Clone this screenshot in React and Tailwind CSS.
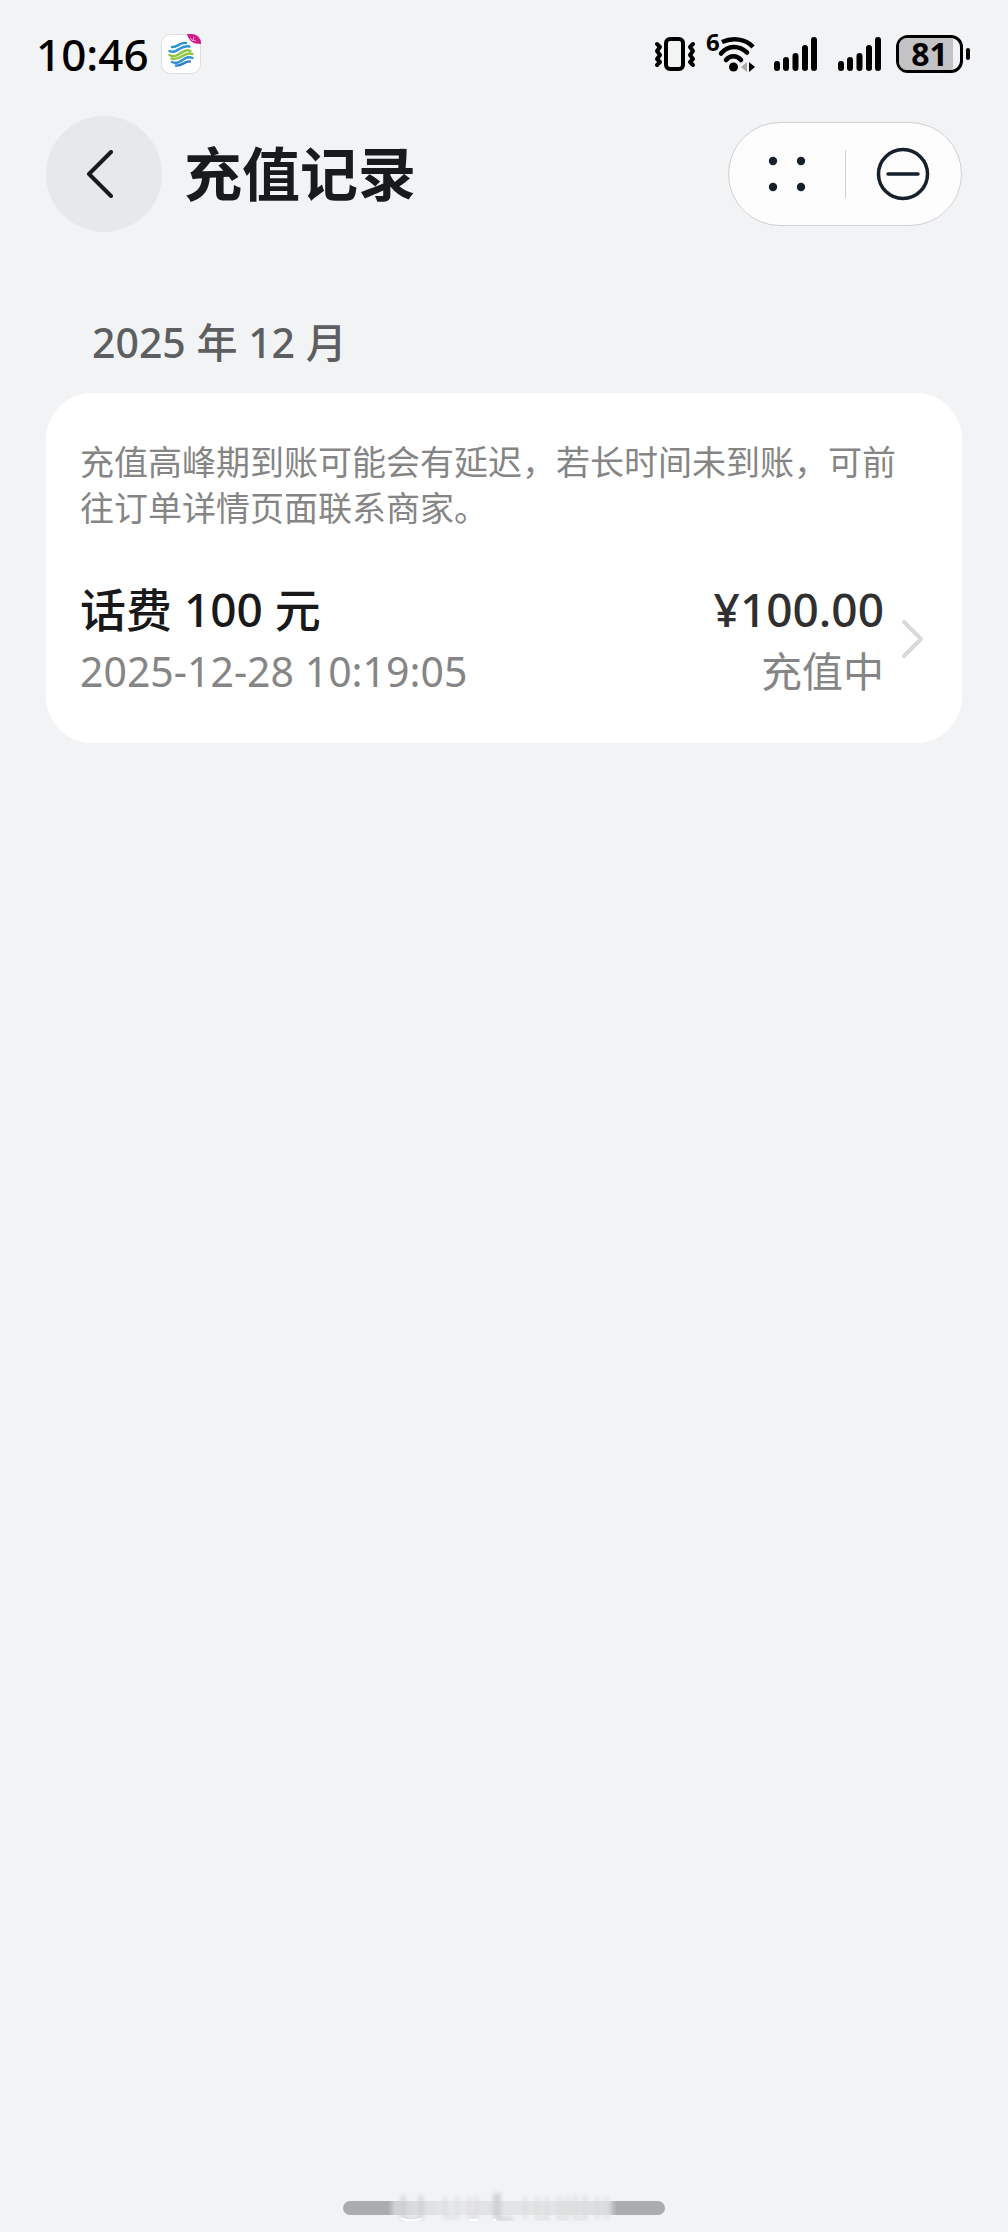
import React from 'react';

const records = [
  {
    id: 1,
    title: '话费 100 元',
    time: '2025-12-28 10:19:05',
    amount: '¥100.00',
    status: '充值中',
  },
];

const VibrateIcon = () => (
  <svg className="w-11 h-10" viewBox="0 0 44 40" fill="none" stroke="#000" strokeLinecap="round" strokeLinejoin="round">
    <rect x="12" y="5" width="17" height="30" rx="4" strokeWidth="4" />
    <path d="M3 10l3 3-3 4 3 4-3 4 3 3-3 3" strokeWidth="4" />
    <path d="M39 10l-3 3 3 4-3 4 3 4-3 3 3 3" strokeWidth="4" />
  </svg>
);

const WifiIcon = () => (
  <svg className="w-12 h-10 overflow-visible" viewBox="0 0 48 40" fill="none" stroke="#000">
    <text x="-2" y="17" fontSize="24" fontWeight="700" fill="#000" stroke="none">6</text>
    <path d="M14 8C25 3 38 5 45 13" strokeWidth="4.500" />
    <path d="M13 19.500C20 11 31 11 39 18.500" strokeWidth="4.500" strokeLinecap="round" />
    <path d="M18 26c4-5 11-5 15 0" strokeWidth="4.500" strokeLinecap="round" />
    <circle cx="25.500" cy="33" r="4.500" fill="#000" stroke="none" />
    <path d="M33 33l6-5v10z" fill="#a9a9ab" stroke="none" />
    <path d="M47 33l-6-5v10z" fill="#000" stroke="none" />
  </svg>
);

const SignalIcon = () => (
  <svg className="w-11 h-10" viewBox="0 0 44 40" stroke="#000" strokeWidth="6" strokeLinecap="round">
    <path d="M3 30v4M12 26v8M21.500 22v12M31 14v20M40 6v28" />
  </svg>
);

const CarrierIcon = () => (
  <svg className="w-10 h-10" viewBox="0 0 40 40" fill="none">
    <defs>
      <clipPath id="carrier-tile">
        <rect width="40" height="40" rx="9" />
      </clipPath>
    </defs>
    <rect x="0.500" y="0.500" width="39" height="39" rx="9" fill="#fff" stroke="#dcdddf" />
    <g strokeWidth="2.400" strokeLinecap="round">
      <path d="M11 13c5 1 8-5 14-4" stroke="#2f93d0" />
      <path d="M8.500 17c7 4 11-7 20-4.500" stroke="#2f93d0" />
      <path d="M8.500 21c9 5 13-8 21-4" stroke="#8cc63f" />
      <path d="M10.500 24.500c9 3 12-8 21-4.500" stroke="#8cc63f" />
      <path d="M11 28c9 4 12-8 20.500-4" stroke="#2f93d0" />
      <path d="M15 31.500c6 1 9-5 14-4" stroke="#2f7fc4" />
    </g>
    <g clipPath="url(#carrier-tile)">
      <path d="M26 0h14v10c-8 0-12-3-14-10z" fill="#d5188b" />
      <path d="M29 4l3 3M33 3l-1 3 3 1" stroke="#f3a9d2" strokeWidth="1" />
    </g>
  </svg>
);

const Battery = ({ level }) => (
  <div className="flex items-center gap-[3px]">
    <div className="relative w-[67px] h-[38px] rounded-xl border-3 border-black flex items-center justify-center">
      <div className="absolute inset-y-0 left-0 rounded-l-lg bg-[#c3c3c5]" style={{ width: `${level + 8}%` }} />
      <span className="relative text-[32px] leading-none font-bold">{level}</span>
    </div>
    <div className="w-1 h-3 rounded-full bg-black" />
  </div>
);

const StatusBar = () => (
  <div className="flex items-center justify-between h-[107px] pl-9 pr-[38px] text-black">
    <div className="flex items-center gap-3">
      <span className="text-[44px] leading-[52px] font-medium">10:46</span>
      <CarrierIcon />
    </div>
    <div className="flex items-center">
      <VibrateIcon />
      <div className="ml-2.5">
        <WifiIcon />
      </div>
      <div className="ml-4.5">
        <SignalIcon />
      </div>
      <div className="ml-5 mr-3.5">
        <SignalIcon />
      </div>
      <Battery level={81} />
    </div>
  </div>
);

const Header = () => (
  <header className="flex items-center px-[46px] pt-[9px]">
    <button type="button" aria-label="返回" className="w-[116px] h-[116px] rounded-full bg-[#e7e8e9] flex items-center justify-center">
      <svg className="w-12 h-12" viewBox="0 0 48 48" fill="none" stroke="#191a1c" strokeWidth="4" strokeLinecap="round" strokeLinejoin="round">
        <path d="M31 2L9 24l22 22" />
      </svg>
    </button>
    <h1 className="ml-[22px] text-[58px] leading-[72px] font-bold text-[#191a1c]">充值记录</h1>
    <div className="ml-auto flex items-center w-[234px] h-[104px] rounded-full border border-[#cfd0d2] bg-[#fdfdfe]">
      <button type="button" aria-label="更多" className="flex-1 h-full flex items-center justify-center">
        <svg className="w-10 h-10" viewBox="0 0 40 40" fill="#15202a">
          <circle cx="6" cy="7" r="4.200" />
          <circle cx="34" cy="7" r="4.200" />
          <circle cx="6" cy="33" r="4.200" />
          <circle cx="34" cy="33" r="4.200" />
        </svg>
      </button>
      <div className="w-px h-12 bg-[#cfd0d2]" />
      <button type="button" aria-label="关闭" className="flex-1 h-full flex items-center justify-center">
        <svg className="w-14 h-14" viewBox="0 0 56 56" fill="none" stroke="#15202a" strokeLinecap="round">
          <circle cx="28" cy="28" r="24.500" strokeWidth="3.500" />
          <path d="M13 28h30" strokeWidth="3.500" />
        </svg>
      </button>
    </div>
  </header>
);

const RecordItem = ({ item }) => (
  <a href="#" className="flex items-center pr-1">
    <div className="flex-1">
      <h3 className="text-[46px] leading-[64px] font-medium text-[#191919]">{item.title}</h3>
      <p className="text-[41px] leading-[60px] text-[#858585]">{item.time}</p>
    </div>
    <div className="text-right">
      <p className="text-[46px] leading-[64px] font-medium text-[#303030]">{item.amount}</p>
      <p className="text-[41px] leading-[60px] text-[#858585]">{item.status}</p>
    </div>
    <svg className="w-6 h-10 ml-4" viewBox="0 0 24 40" fill="none" stroke="#d9d9d9" strokeWidth="4" strokeLinecap="round" strokeLinejoin="round">
      <path d="M4 3l17 17L4 37" />
    </svg>
  </a>
);

const HomeIndicator = () => (
  <div className="mt-auto flex justify-center pb-[11px]">
    <svg className="w-[322px] h-8" viewBox="0 0 322 32">
      <defs>
        <linearGradient id="bar-fade" x1="0" x2="1" y1="0" y2="0">
          <stop offset="0.140" stopColor="#abacad" />
          <stop offset="0.160" stopColor="#cfd0d1" />
          <stop offset="0.230" stopColor="#dcddde" />
          <stop offset="0.350" stopColor="#e9eaec" />
          <stop offset="0.450" stopColor="#e2e3e4" />
          <stop offset="0.600" stopColor="#e4e5e6" />
          <stop offset="0.820" stopColor="#dcddde" />
          <stop offset="0.850" stopColor="#abacad" />
        </linearGradient>
        <filter id="soft">
          <feGaussianBlur stdDeviation="2 2" />
        </filter>
      </defs>
      <rect y="12" width="322" height="14" rx="7" fill="url(#bar-fade)" />
      <g filter="url(#soft)" fill="none" stroke="#c9cacb" strokeWidth="3">
        <path d="M60 6v24h18V6M152 4v26M156 4v26h14" />
        <path d="M102 8v20h12V8M126 8v20h8V8M182 8v22M194 8v22h10V8M216 8v22h8V8M232 6v24h10V6M254 8v22M264 8v22" stroke="#dbdcdd" />
      </g>
      <path d="M58 29c4 3 17 3 21 0M127 31h8M150 31h3" fill="none" stroke="#fff" strokeWidth="2" />
    </svg>
  </div>
);

const App = () => {
  return (
    <div className="min-h-screen flex flex-col bg-[#f1f3f5] font-['Noto_Sans','Noto_Sans_CJK_SC',sans-serif]" lang="zh-CN">
      <StatusBar />
      <Header />
      <main className="px-[46px] pt-20">
        <h2 className="pl-[46px] text-[41px] leading-[60px] font-medium text-[#5d5e60]">2025 年 12 月</h2>
        <section className="mt-[21px] px-[34px] pt-[46px] pb-[42px] rounded-[46px] bg-white">
          <p className="mb-[46px] text-[34px] leading-[46px] text-[#858585]">
            充值高峰期到账可能会有延迟，若长时间未到账，可前往订单详情页面联系商家。
          </p>
          {records.map((item) => (
            <RecordItem key={item.id} item={item} />
          ))}
        </section>
      </main>
      <HomeIndicator />
    </div>
  );
};

export default App;
